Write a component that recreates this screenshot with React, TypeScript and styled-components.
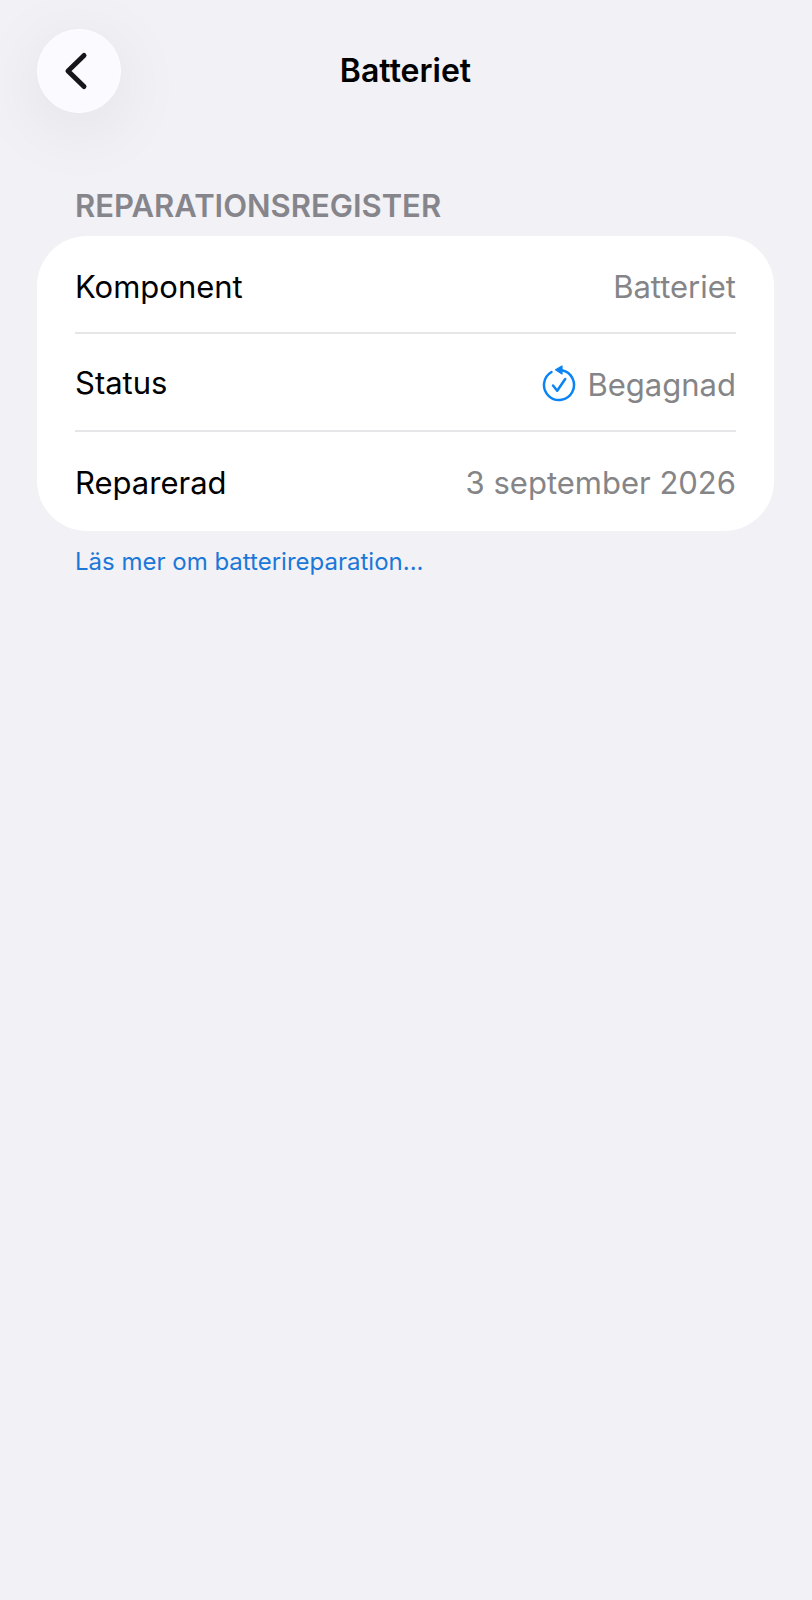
import React from "react";
import styled, { createGlobalStyle } from "styled-components";

const GlobalStyle = createGlobalStyle`
  *, *::before, *::after { box-sizing: border-box; }
  body {
    margin: 0;
    background: #f1f1f6;
    color: #000;
    font-family: Inter, "Liberation Sans", sans-serif;
    font-size: 31px;
    line-height: 40px;
  }
`;

const Screen = styled.div`
  min-height: 100vh;
  padding: 29px 38px 29px 37px;
`;

const NavBar = styled.header`
  display: grid;
  grid-template-columns: 84px 1fr 84px;
  align-items: center;
`;

const BackButton = styled.button`
  display: grid;
  place-items: center;
  width: 84px;
  height: 84px;
  padding: 0;
  border: 1px solid #fff;
  border-radius: 50%;
  background: #fbfbff;
  color: #15151a;
  box-shadow: 0 14px 72px rgba(0, 0, 0, 0.08);
  cursor: pointer;
`;

const Title = styled.h1`
  margin: 0;
  font-size: 32px;
  font-weight: 600;
  text-align: center;
`;

const Section = styled.section`
  margin-top: 73px;
`;

const SectionTitle = styled.h2`
  margin: 0 0 10px;
  padding: 0 38px;
  color: #85858b;
  font-size: 31px;
  font-weight: 600;
`;

const Card = styled.dl`
  margin: 0;
  padding: 0 38px;
  border-radius: 50px;
  background: #fff;
`;

const Row = styled.div`
  display: flex;
  align-items: flex-start;
  justify-content: space-between;
  gap: 24px;
  padding: 31px 0 25px;

  & + & {
    padding: 29px 0 23px;
    border-top: 2px solid #e6e6e8;
  }

  & + & + & {
    padding: 31px 0 28px;
  }
`;

const Label = styled.dt``;

const Value = styled.dd`
  display: flex;
  align-items: center;
  gap: 11px;
  margin: 0;
  color: #858588;
`;

const IconValue = styled(Value)`
  line-height: 44px;
`;

const MoreLink = styled.a`
  display: inline-block;
  margin: 15px 38px 0;
  color: #1b78d8;
  font-size: 24px;
  line-height: 32px;
  text-decoration: none;
`;

const ChevronIcon = () => (
  <svg width="40" height="40" viewBox="0 0 40 40" fill="none" aria-hidden="true">
    <path d="M25 4.500 9 20 25 35.500" stroke="currentColor" strokeWidth="5" strokeLinecap="round" strokeLinejoin="round" />
  </svg>
);

const UsedPartIcon = () => (
  <svg width="36" height="40" viewBox="-18 -20 36 40" fill="none" stroke="#0a84f5" strokeLinecap="round" strokeLinejoin="round" aria-hidden="true">
    <path d="M-7.500-13A15 15 0 1 0 3-14.700" strokeWidth="2.500" />
    <path d="M-3.500-15.200 3-19V-11Z" fill="#0a84f5" strokeWidth="1.200" />
    <path d="M-6 .5-1.800 5.800 6.200-6" strokeWidth="2.500" />
  </svg>
);

export default function App() {
  return (
    <>
      <GlobalStyle />
      <Screen>
        <NavBar>
          <BackButton type="button" aria-label="Tillbaka">
            <ChevronIcon />
          </BackButton>
          <Title>Batteriet</Title>
        </NavBar>
        <main>
          <Section>
            <SectionTitle>REPARATIONSREGISTER</SectionTitle>
            <Card>
              <Row>
                <Label>Komponent</Label>
                <Value>Batteriet</Value>
              </Row>
              <Row>
                <Label>Status</Label>
                <IconValue>
                  <UsedPartIcon />
                  Begagnad
                </IconValue>
              </Row>
              <Row>
                <Label>Reparerad</Label>
                <Value>3 september 2026</Value>
              </Row>
            </Card>
            <MoreLink href="#batterireparation">Läs mer om batterireparation...</MoreLink>
          </Section>
        </main>
      </Screen>
    </>
  );
}
